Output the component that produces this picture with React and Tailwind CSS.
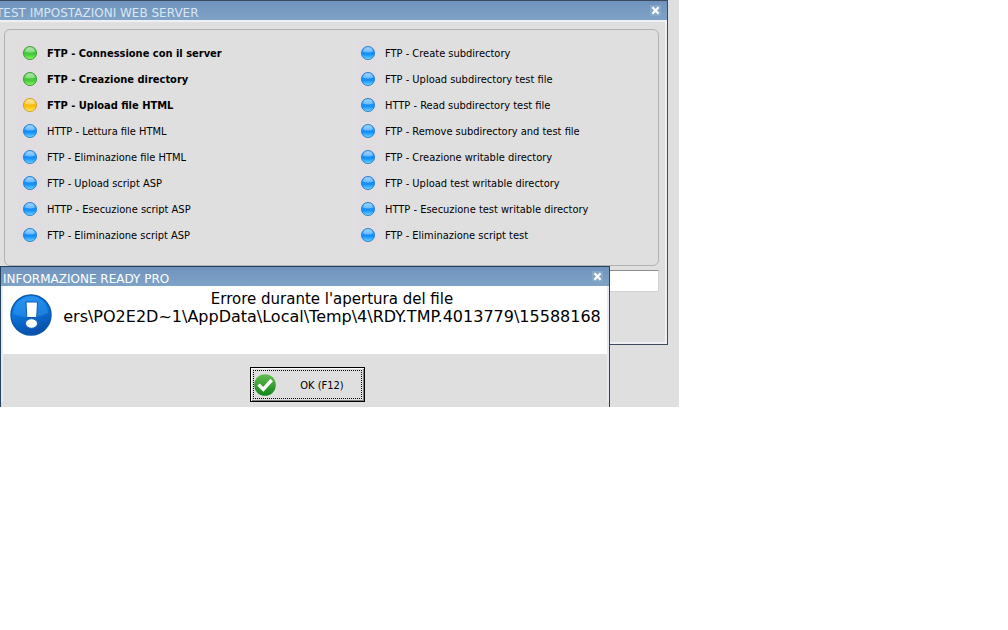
import { useState } from "react"

const leftSteps = [
    { label: "FTP - Connessione con il server", status: "ok" },
    { label: "FTP - Creazione directory", status: "ok" },
    { label: "FTP - Upload file HTML", status: "running" },
    { label: "HTTP - Lettura file HTML", status: "idle" },
    { label: "FTP - Eliminazione file HTML", status: "idle" },
    { label: "FTP - Upload script ASP", status: "idle" },
    { label: "HTTP - Esecuzione script ASP", status: "idle" },
    { label: "FTP - Eliminazione script ASP", status: "idle" },
]

const rightSteps = [
    { label: "FTP - Create subdirectory", status: "idle" },
    { label: "FTP - Upload subdirectory test file", status: "idle" },
    { label: "HTTP - Read subdirectory test file", status: "idle" },
    { label: "FTP - Remove subdirectory and test file", status: "idle" },
    { label: "FTP - Creazione writable directory", status: "idle" },
    { label: "FTP - Upload test writable directory", status: "idle" },
    { label: "HTTP - Esecuzione test writable directory", status: "idle" },
    { label: "FTP - Eliminazione script test", status: "idle" },
]

const ledColors = {
    ok: { edge: "#3c9a3a", top: "#8fdc84", mid: "#46c83c", low: "#8dfa62" },
    running: { edge: "#cf9a2a", top: "#ffe07a", mid: "#f9bd10", low: "#fff05a" },
    idle: { edge: "#2a80cc", top: "#86c8ff", mid: "#1590fb", low: "#6fd6ff" },
}

const Led = ({ status }) => {
    const c = ledColors[status]
    return (
        <svg className="size-6 shrink-0 bg-[#e0dce0]" viewBox="0 0 24 24" aria-hidden="true">
            <defs>
                <linearGradient id={`led-${status}`} x1="0" y1="0" x2="0" y2="1">
                    <stop offset="0" stopColor={c.top} />
                    <stop offset="0.45" stopColor={c.mid} />
                    <stop offset="0.6" stopColor={c.mid} />
                    <stop offset="1" stopColor={c.low} />
                </linearGradient>
            </defs>
            <circle cx="12" cy="12" r="6.6" fill={`url(#led-${status})`} stroke={c.edge} strokeWidth="0.9" />
            <path d="M7.2 10.8a4.8 4.4 0 0 1 9.6 0c-2.6 1-7 1-9.6 0z" fill="#fff" opacity="0.35" />
        </svg>
    )
}

const StepList = ({ steps }) => (
    <ul>
        {steps.map((step) => (
            <li key={step.label} className="flex h-[26px] items-center gap-[5px] whitespace-nowrap">
                <Led status={step.status} />
                <span className={step.status === "idle" ? "pt-px" : "pt-0.5 font-bold"}>{step.label}</span>
            </li>
        ))}
    </ul>
)

const TitleBar = ({ title, onClose, className }) => (
    <div className={`flex h-[19px] items-center justify-between bg-linear-to-b from-[#6f93bd] to-[#7fa3c6] pr-1.5 ${className}`}>
        <h2 className="pt-1 font-['DejaVu_Sans'] text-[12px] leading-4 whitespace-nowrap">{title}</h2>
        <button type="button" aria-label="Chiudi" onClick={onClose} className="bg-[#86a6c8]">
            <svg className="size-[11px]" viewBox="0 0 11 11" aria-hidden="true">
                <path d="M2.4 2.2l6.2 6.6M8.6 2.2L2.4 8.8" stroke="#fff" strokeWidth="2.2" />
            </svg>
        </button>
    </div>
)

const InfoIcon = () => (
    <svg className="size-[42px] shrink-0" viewBox="0 0 42 42" aria-hidden="true">
        <defs>
            <linearGradient id="info-ball" x1="0" y1="0" x2="0.3" y2="1">
                <stop offset="0" stopColor="#1e90ee" />
                <stop offset="0.5" stopColor="#0a74dc" />
                <stop offset="1" stopColor="#0a52ae" />
            </linearGradient>
        </defs>
        <circle cx="21" cy="21" r="20" fill="url(#info-ball)" stroke="#0b57aa" strokeWidth="1.4" />
        <path d="M4 20a17 17 0 0 1 34-1c-9 5-24 6-34 1z" fill="#4fb0ff" opacity="0.3" />
        <path d="M16 8h11.5l-.8 15.5h-9.9z" fill="#fff" stroke="#0c5ab4" />
        <ellipse cx="21.5" cy="29.5" rx="6" ry="4.8" fill="#fff" stroke="#0c5ab4" />
    </svg>
)

const CheckIcon = () => (
    <svg className="size-[22px] shrink-0" viewBox="0 0 22 22" aria-hidden="true">
        <defs>
            <linearGradient id="check-ball" x1="0" y1="0" x2="0" y2="1">
                <stop offset="0" stopColor="#63bd4f" />
                <stop offset="1" stopColor="#12851a" />
            </linearGradient>
        </defs>
        <circle cx="11" cy="11" r="10.8" fill="url(#check-ball)" />
        <path d="M4.5 10.6l4.8 4.8 8.4-9.4" fill="none" stroke="#fff" strokeWidth="3.4" />
    </svg>
)

const App = () => {
    const [open, setOpen] = useState(true)
    const [output, setOutput] = useState("")

    return (
        <main className="relative w-full max-w-[679px] overflow-hidden bg-[#dfdfdf] pr-[11px] pb-[62px] font-['DejaVu_Sans_Condensed','DejaVu_Sans',sans-serif] text-[11px] leading-4 text-black">
            <section className="overflow-hidden border-t border-r border-b border-[#3c4a5e]">
                <TitleBar title="TEST IMPOSTAZIONI WEB SERVER" className="-ml-1 text-[#dbe6f2]" />
                <div className="border-t-2 border-r-2 border-b-2 border-[#eef0f6] pt-[7px] pr-1.5 pb-[50px] pl-1">
                    <div className="grid grid-cols-[338fr_302fr] rounded-md border border-[#b2b2b2] pt-2.5 pb-[17px] pl-[13px]">
                        <StepList steps={leftSteps} />
                        <StepList steps={rightSteps} />
                    </div>
                    <input
                        type="text"
                        aria-label="Esito"
                        value={output}
                        onChange={(e) => setOutput(e.target.value)}
                        className="mt-1 block h-[22px] w-full border-t border-r border-b border-t-[#8d8d8d] border-r-[#d2d2d2] border-b-[#d2d2d2] bg-white px-1"
                    />
                </div>
            </section>

            {open && (
                <section role="dialog" aria-label="Informazione Ready Pro" className="absolute top-[266px] right-[69px] bottom-0 left-0 border-t border-r border-l border-[#24425f] bg-[#dfdfdf]">
                    <TitleBar title="INFORMAZIONE READY PRO" onClose={() => setOpen(false)} className="pl-0.5 text-white" />
                    <div className="border-r-2 border-l-2 border-[#e6eaf2]">
                        <div className="flex h-[68px] items-start bg-white pt-2 pr-1.5 pl-[7px]">
                            <InfoIcon />
                            <div className="-mt-1 ml-[11px] flex min-w-0 flex-1 flex-col items-center overflow-hidden font-['DejaVu_Sans'] text-[15px] leading-[18px] whitespace-nowrap">
                                <p>Errore durante l'apertura del file</p>
                                <p className="text-[16px]">ers\PO2E2D~1\AppData\Local\Temp\4\RDY.TMP.4013779\15588168</p>
                            </div>
                        </div>
                        <div className="flex justify-center pt-[13px] pl-1">
                            <button type="button" onClick={() => setOpen(false)} className="h-[35px] w-[115px] border border-black bg-[#dfdfdf] p-px shadow-[inset_1px_1px_0_#fff,inset_-1px_-1px_0_#808080]">
                                <span className="m-px flex h-[29px] items-center border border-dotted border-black">
                                    <CheckIcon />
                                    <span className="flex-1 pt-0.5 pl-2 text-center">OK (F12)</span>
                                </span>
                            </button>
                        </div>
                    </div>
                </section>
            )}
        </main>
    )
}

export default App
